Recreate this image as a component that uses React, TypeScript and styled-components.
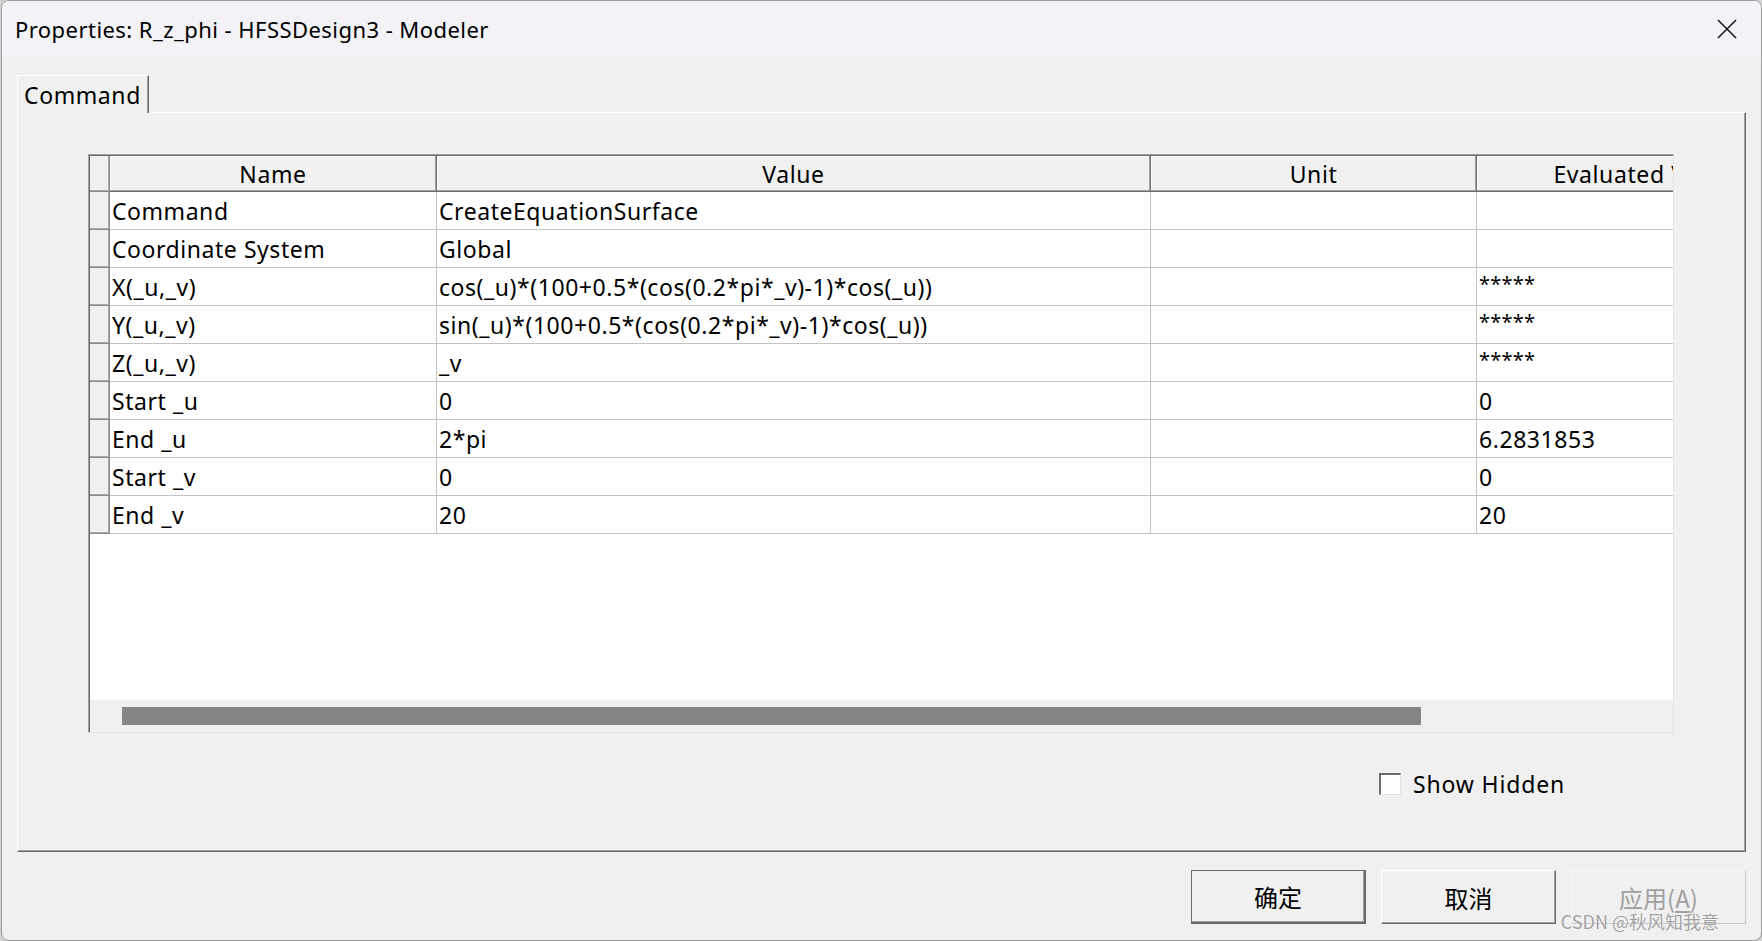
import styled, { createGlobalStyle } from "styled-components";

const GlobalStyle = createGlobalStyle`
  html, body {
    margin: 0;
    padding: 0;
    background: #d2d2d2;
  }
  body {
    font-family: "Noto Sans", "Noto Sans CJK SC", sans-serif;
    color: #000;
  }
`;

const Window = styled.div`
  box-sizing: border-box;
  width: 1761px;
  height: 941px;
  margin-left: 1px;
  border: 1px solid #9c9c9c;
  border-radius: 8px;
  overflow: hidden;
  background: #f0f0f0;
  display: flex;
  flex-direction: column;
`;

const TitleBar = styled.div`
  height: 56px;
  flex: none;
  background: #f3f2f7;
  display: flex;
  align-items: center;
  padding-left: 13px;
`;

const Title = styled.div`
  flex: 1;
  font-size: 22px;
  letter-spacing: 0.45px;
`;

const CloseButton = styled.div`
  width: 68px;
  height: 56px;
  display: flex;
  align-items: center;
  justify-content: center;
`;

const Body = styled.div`
  flex: 1;
  display: flex;
  flex-direction: column;
  padding: 18px 15px 0 15px;
`;

const TabStrip = styled.div`
  display: flex;
  position: relative;
  z-index: 1;
`;

const Tab = styled.div`
  box-sizing: border-box;
  height: 38px;
  width: 132px;
  margin-bottom: -1px;
  padding: 0 0 0 6px;
  display: flex;
  align-items: center;
  font-size: 23px;
  letter-spacing: 0.6px;
  background: #f0f0f0;
  border-top: 1px solid #ffffff;
  border-left: 1px solid #ffffff;
  border-right: 1px solid #696969;
  box-shadow: inset -1px 0 0 #a0a0a0;
`;

const Panel = styled.div`
  box-sizing: border-box;
  height: 740px;
  border-top: 1px solid #ffffff;
  border-left: 1px solid #ffffff;
  border-right: 1px solid #696969;
  border-bottom: 1px solid #696969;
  box-shadow: inset -1px -1px 0 #a0a0a0;
  padding: 41px 0 0 70px;
  display: flex;
  flex-direction: column;
`;

const Table = styled.div`
  box-sizing: border-box;
  width: 1586px;
  height: 579px;
  border-top: 1px solid #a0a0a0;
  border-left: 1px solid #a0a0a0;
  border-right: 1px solid #e3e3e3;
  border-bottom: 1px solid #e3e3e3;
  box-shadow: inset 1px 1px 0 #696969;
  padding: 1px 0 0 1px;
  overflow: hidden;
  display: flex;
  flex-direction: column;
`;

const GridArea = styled.div`
  flex: 1;
  background: #ffffff;
  overflow: hidden;
`;

const Row = styled.div<{ $head?: boolean }>`
  display: grid;
  grid-template-columns: 20px 327px 714px 326px 334px;
  height: ${(p) => (p.$head ? 36 : 38)}px;
`;

const Gutter = styled.div`
  box-sizing: border-box;
  background: #f0f0f0;
  border-right: 1px solid #8a8a8a;
  border-bottom: 1px solid #8a8a8a;
  box-shadow: inset -1px -1px 0 #a8a8a8;
`;

const HeadCell = styled.div`
  box-sizing: border-box;
  background: #f0f0f0;
  border-right: 1px solid #6e6e6e;
  border-bottom: 1px solid #6e6e6e;
  box-shadow: inset -1px -1px 0 #a0a0a0, inset 1px 1px 0 #ffffff;
  display: flex;
  align-items: center;
  justify-content: center;
  font-size: 23px;
  letter-spacing: 0.6px;
  white-space: nowrap;
  overflow: hidden;
`;

const Cell = styled.div`
  box-sizing: border-box;
  border-right: 1px solid #c4c4c4;
  border-bottom: 1px solid #c4c4c4;
  padding-left: 2px;
  display: flex;
  align-items: center;
  font-size: 23px;
  letter-spacing: 0.55px;
  white-space: nowrap;
  overflow: hidden;
`;

const Stars = styled.span`
  font-size: 20px;
  letter-spacing: 0.2px;
  margin-top: -7px;
`;

const ScrollBar = styled.div`
  height: 32px;
  flex: none;
  background: #f0f0f0;
  padding: 7px 0 0 32px;
  box-sizing: border-box;
`;

const Thumb = styled.div<{ $width: number }>`
  width: ${(p) => p.$width}px;
  height: 18px;
  background: #858585;
`;

const CheckRow = styled.label`
  display: flex;
  align-items: center;
  gap: 12px;
  margin: 35px 0 0 1291px;
  font-size: 23px;
  letter-spacing: 0.85px;
`;

const CheckBox = styled.span`
  box-sizing: border-box;
  width: 22px;
  height: 22px;
  background: #ffffff;
  border-top: 2px solid #6d6d6d;
  border-left: 2px solid #6d6d6d;
  border-right: 1px solid #e3e3e3;
  border-bottom: 1px solid #e3e3e3;
`;

const Footer = styled.div`
  display: flex;
  justify-content: flex-end;
  gap: 15px;
  padding: 18px 0 0 0;
  position: relative;
`;

const Button = styled.div<{ $default?: boolean; $disabled?: boolean }>`
  box-sizing: border-box;
  width: 175px;
  height: 54px;
  display: flex;
  align-items: center;
  justify-content: center;
  font-family: "Noto Sans CJK SC", "Noto Sans", sans-serif;
  font-size: 24px;
  color: ${(p) => (p.$disabled ? "#a0a0a0" : "#000")};
  background: #f0f0f0;
  border-top: 1px solid ${(p) => (p.$default ? "#6a6a6a" : p.$disabled ? "#f8f8f8" : "#ffffff")};
  border-left: 1px solid ${(p) => (p.$default ? "#6a6a6a" : p.$disabled ? "#f8f8f8" : "#ffffff")};
  border-right: ${(p) => (p.$default ? 2 : 1)}px solid ${(p) => (p.$disabled ? "#c8c8c8" : "#696969")};
  border-bottom: ${(p) => (p.$default ? 2 : 1)}px solid ${(p) => (p.$disabled ? "#c8c8c8" : "#696969")};
  box-shadow: ${(p) => (p.$disabled ? "none" : "inset -1px -1px 0 #a0a0a0")};
  u {
    text-decoration: underline;
    text-underline-offset: 3px;
  }
`;

const Watermark = styled.div`
  position: absolute;
  right: 27px;
  bottom: -10px;
  font-family: "Noto Sans CJK SC", sans-serif;
  font-size: 18px;
  color: rgba(120, 120, 120, 0.7);
  text-shadow: 0 0 1px #ffffff;
  white-space: nowrap;
  pointer-events: none;
`;

type Param = { name: string; value: string; unit: string; evaluated: string };

const params: Param[] = [
  { name: "Command", value: "CreateEquationSurface", unit: "", evaluated: "" },
  { name: "Coordinate System", value: "Global", unit: "", evaluated: "" },
  { name: "X(_u,_v)", value: "cos(_u)*(100+0.5*(cos(0.2*pi*_v)-1)*cos(_u))", unit: "", evaluated: "*****" },
  { name: "Y(_u,_v)", value: "sin(_u)*(100+0.5*(cos(0.2*pi*_v)-1)*cos(_u))", unit: "", evaluated: "*****" },
  { name: "Z(_u,_v)", value: "_v", unit: "", evaluated: "*****" },
  { name: "Start _u", value: "0", unit: "", evaluated: "0" },
  { name: "End _u", value: "2*pi", unit: "", evaluated: "6.2831853" },
  { name: "Start _v", value: "0", unit: "", evaluated: "0" },
  { name: "End _v", value: "20", unit: "", evaluated: "20" },
];

function App() {
  return (
    <>
      <GlobalStyle />
      <Window>
        <TitleBar>
          <Title>Properties: R_z_phi - HFSSDesign3 - Modeler</Title>
          <CloseButton>
            <svg width="20" height="20" viewBox="0 0 20 20">
              <path d="M1 1 L19 19 M19 1 L1 19" stroke="#1b1b1b" strokeWidth="1.6" fill="none" />
            </svg>
          </CloseButton>
        </TitleBar>
        <Body>
          <TabStrip>
            <Tab>Command</Tab>
          </TabStrip>
          <Panel>
            <Table>
              <GridArea>
                <Row $head>
                  <Gutter />
                  <HeadCell>Name</HeadCell>
                  <HeadCell>Value</HeadCell>
                  <HeadCell>Unit</HeadCell>
                  <HeadCell>Evaluated Value</HeadCell>
                </Row>
                {params.map((p) => (
                  <Row key={p.name}>
                    <Gutter />
                    <Cell>{p.name}</Cell>
                    <Cell>{p.value}</Cell>
                    <Cell>{p.unit}</Cell>
                    <Cell>
                      {p.evaluated === "*****" ? <Stars>*****</Stars> : p.evaluated}
                    </Cell>
                  </Row>
                ))}
              </GridArea>
              <ScrollBar>
                <Thumb $width={1299} />
              </ScrollBar>
            </Table>
            <CheckRow>
              <CheckBox />
              Show Hidden
            </CheckRow>
          </Panel>
          <Footer>
            <Button $default>确定</Button>
            <Button>取消</Button>
            <Button $disabled>
              应用(<u>A</u>)
            </Button>
            <Watermark>CSDN @秋风知我意</Watermark>
          </Footer>
        </Body>
      </Window>
    </>
  );
}

export default App;
